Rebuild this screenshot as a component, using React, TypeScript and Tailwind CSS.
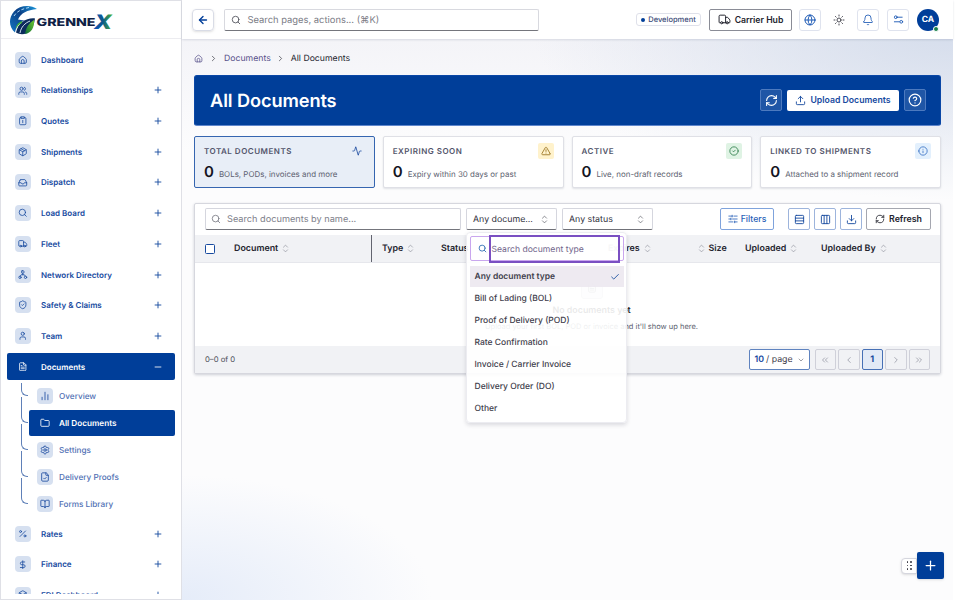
import type { ReactNode } from "react";
import {
  Activity,
  ArrowLeft,
  Bell,
  BookOpen,
  Box,
  Check,
  ChevronDown,
  ChevronLeft,
  ChevronRight,
  ChevronsLeft,
  ChevronsRight,
  ChartNoAxesColumn,
  CircleAlert,
  CircleCheck,
  CircleQuestionMark,
  Columns3,
  Download,
  DollarSign,
  FileCheck,
  FileText,
  Folder,
  Globe,
  Inbox,
  Minus,
  Package,
  Percent,
  Plus,
  RefreshCw,
  Rows3,
  Search,
  Settings,
  ShieldCheck,
  Sun,
  TriangleAlert,
  Truck,
  Upload,
  User,
  Users,
  type LucideIcon,
} from "lucide-react";

type IconProps = { className?: string; strokeWidth?: number };

function Glyph({
  className,
  strokeWidth = 2,
  children,
}: IconProps & { children: ReactNode }) {
  return (
    <svg
      viewBox="0 0 24 24"
      fill="none"
      stroke="currentColor"
      strokeWidth={strokeWidth}
      strokeLinecap="round"
      strokeLinejoin="round"
      className={className}
    >
      {children}
    </svg>
  );
}

function HomeIcon(props: IconProps) {
  return (
    <Glyph {...props}>
      <path d="M3 11.5a3 3 0 0 1 1.1-2.3l6-5.2a3 3 0 0 1 3.8 0l6 5.2a3 3 0 0 1 1.1 2.3V18a3 3 0 0 1-3 3H6a3 3 0 0 1-3-3z" />
      <path d="M8.5 21v-6a3.5 3.5 0 0 1 7 0v6" />
    </Glyph>
  );
}

function ClipboardIcon(props: IconProps) {
  return (
    <Glyph {...props}>
      <path d="M8 4H6.500A2.500 2.500 0 0 0 4 6.500v13A2.500 2.500 0 0 0 6.500 22h11a2.500 2.500 0 0 0 2.500-2.500v-13A2.500 2.500 0 0 0 17.500 4H16" />
      <path d="M8 2h8v4H8zM12 11v6" />
    </Glyph>
  );
}

function NetworkIcon(props: IconProps) {
  return (
    <Glyph {...props}>
      <circle cx="5" cy="18.5" r="3" />
      <circle cx="19" cy="18.5" r="3" />
      <rect x="9" y="2" width="6" height="6" rx="1.5" />
      <path d="M12 8v4M5.5 15.5 8 12h8l2.5 3.5" />
    </Glyph>
  );
}

function SlidersIcon(props: IconProps) {
  return (
    <Glyph {...props}>
      <circle cx="6" cy="7" r="3" />
      <path d="M9 7h11M3 17h11" />
      <circle cx="18" cy="17" r="3" />
    </Glyph>
  );
}

function FilterIcon(props: IconProps) {
  return (
    <Glyph {...props}>
      <path d="M2 5h8M14 5h8M2 12h5M11 12h11M2 19h10M16 19h6M10 3v4M7 10v4M16 17v4" />
    </Glyph>
  );
}

function SortIcon({ className = "size-[9px] text-[#8e909b]" }: IconProps) {
  return (
    <Glyph className={className} strokeWidth={1.8}>
      <path d="M6.5 8.500 12 3l5.500 5.500M6.500 15.500 12 21l5.500-5.500" />
    </Glyph>
  );
}

type NavIcon = LucideIcon | typeof HomeIcon;
type NavEntry = { label: string; icon: NavIcon; leaf?: boolean };

const navTop: NavEntry[] = [
  { label: "Dashboard", icon: HomeIcon, leaf: true },
  { label: "Relationships", icon: Users },
  { label: "Quotes", icon: ClipboardIcon },
  { label: "Shipments", icon: Package },
  { label: "Dispatch", icon: Inbox },
  { label: "Load Board", icon: Search },
  { label: "Fleet", icon: Truck },
  { label: "Network Directory", icon: NetworkIcon },
  { label: "Safety & Claims", icon: ShieldCheck },
  { label: "Team", icon: User },
];

const navBottom: NavEntry[] = [
  { label: "Rates", icon: Percent },
  { label: "Finance", icon: DollarSign },
  { label: "EDI Dashboard", icon: Box },
];

const documentLinks = [
  { label: "Overview", icon: ChartNoAxesColumn },
  { label: "All Documents", icon: Folder, active: true },
  { label: "Settings", icon: Settings },
  { label: "Delivery Proofs", icon: FileCheck },
  { label: "Forms Library", icon: BookOpen },
];

const stats = [
  {
    label: "Total documents",
    hint: "BOLs, PODs, invoices and more",
    icon: Activity,
    tone: "text-[#1d4ca0]",
    active: true,
  },
  {
    label: "Expiring soon",
    hint: "Expiry within 30 days or past",
    icon: TriangleAlert,
    tone: "bg-[#fff2cc] text-[#96701c]",
  },
  {
    label: "Active",
    hint: "Live, non-draft records",
    icon: CircleCheck,
    tone: "bg-[#dff3e4] text-[#2e7d4a]",
  },
  {
    label: "Linked to shipments",
    hint: "Attached to a shipment record",
    icon: CircleAlert,
    tone: "bg-[#e3f0fd] text-[#3a72c4] [&>svg]:rotate-180",
  },
];

const documentTypes = [
  "Any document type",
  "Bill of Lading (BOL)",
  "Proof of Delivery (POD)",
  "Rate Confirmation",
  "Invoice / Carrier Invoice",
  "Delivery Order (DO)",
  "Other",
];

function Logo() {
  return (
    <svg viewBox="0 0 106 32" className="h-8 w-[106px]" aria-label="Grennex">
      <defs>
        <linearGradient id="swoosh" x1="1" y1="0" x2="0" y2="1">
          <stop offset="0" stopColor="#1b9be0" />
          <stop offset="0.45" stopColor="#0b3f86" />
          <stop offset="1" stopColor="#1478c4" />
        </linearGradient>
        <linearGradient id="leaf" x1="0" y1="1" x2="1" y2="0">
          <stop offset="0" stopColor="#0f6c3c" />
          <stop offset="1" stopColor="#6cc82d" />
        </linearGradient>
        <linearGradient id="cross" x1="0" y1="0" x2="1" y2="0">
          <stop offset="0" stopColor="#0b4fc0" />
          <stop offset="0.5" stopColor="#0d5a8a" />
          <stop offset="1" stopColor="#4db82e" />
        </linearGradient>
      </defs>
      <path
        d="M28 5C22 .5 11 .5 5 7.500c-6 7-5 16 1 21 1-6 4-9 9-12l-6-1C12 9 18 6 28 5z"
        fill="url(#swoosh)"
      />
      <path d="M26 14.500c-8-1-17 4-19 14 8 4.500 17 0 19-14z" fill="#0b2c5c" />
      <path d="M25 16c-5 3-8 7-9 14 6-1 9.500-6 9-14z" fill="url(#leaf)" />
      <path d="M13 19c-3 1-5 3-6 6 0-4 2-6 6-8z" fill="#43b23a" />
      <path d="M21 17c-5 2-9 6-10 12" stroke="#e6f3ff" strokeWidth="0.900" fill="none" />
      <path
        d="M5 12c3-5 8-7 15-8.500"
        stroke="#bfe6ff"
        strokeWidth="0.900"
        strokeDasharray="3 2"
        fill="none"
      />
      <text
        x="27.500"
        y="21.500"
        fill="#0f2145"
        fontFamily="Inter, sans-serif"
        fontWeight="800"
        fontSize="11"
        textLength="59"
        lengthAdjust="spacingAndGlyphs"
      >
        GRENNE
      </text>
      <text
        x="85"
        y="24.500"
        fill="url(#cross)"
        fontFamily="Inter, sans-serif"
        fontWeight="800"
        fontStyle="italic"
        fontSize="20"
        textLength="18"
        lengthAdjust="spacingAndGlyphs"
      >
        X
      </text>
    </svg>
  );
}

function NavRow({ entry, open = false }: { entry: NavEntry; open?: boolean }) {
  const Icon = entry.icon;
  return (
    <div className="flex h-[30.700px] shrink-0 items-center">
      <div
        className={`flex h-[27px] w-full items-center rounded-[2px] pl-2 pr-3 ${
          open ? "bg-[#003e99] text-white" : "text-[#174a9f]"
        }`}
      >
        <span
          className={`flex size-4 items-center justify-center rounded-[4px] ${
            open ? "" : "bg-[#d6e0f0]"
          }`}
        >
          <Icon className="size-[9.500px]" strokeWidth={2} />
        </span>
        <span className="ml-2.5 flex-1 text-[8px] font-semibold">
          {entry.label}
        </span>
        {!entry.leaf &&
          (open ? (
            <Minus className="size-[10px]" strokeWidth={2} />
          ) : (
            <Plus className="size-[10px]" strokeWidth={2.2} />
          ))}
      </div>
    </div>
  );
}

function Sidebar() {
  return (
    <aside className="flex h-full w-[182px] shrink-0 flex-col border border-[#dfe0e6] bg-white">
      <div className="flex h-[38px] shrink-0 items-center border-b border-[#ececf0] pl-2">
        <Logo />
      </div>
      <nav className="flex min-h-0 flex-1 flex-col overflow-hidden pl-1.5 pr-1.5 pt-[5.400px]">
        {navTop.map((entry) => (
          <NavRow key={entry.label} entry={entry} />
        ))}
        <NavRow entry={{ label: "Documents", icon: FileText }} open />
        <div className="mb-[0.600px] flex shrink-0 flex-col pl-[13.500px] pt-[0.900px]">
          {documentLinks.map(({ label, icon: Icon, active }, index) => (
            <div key={label} className="flex h-[27px] items-center">
              <span
                className={`w-[7px] shrink-0 self-start rounded-bl-[6px] border-b border-l border-[#5f80b8] ${
                  index === 0 ? "h-[13px]" : "-mt-[13px] h-[26px]"
                }`}
              />
              <div
                className={`ml-[1.500px] flex h-[26px] flex-1 items-center rounded-[2px] pl-[7.500px] ${
                  active
                    ? "bg-[#003e99] font-semibold text-white"
                    : "font-medium text-[#5070b4]"
                }`}
              >
                <span
                  className={`flex size-4 items-center justify-center rounded-[4px] ${
                    active ? "" : "bg-[#d6e0f0] text-[#1d4ca0]"
                  }`}
                >
                  <Icon className="size-[10px]" strokeWidth={2} />
                </span>
                <span className="ml-[6.500px] text-[8.200px]">{label}</span>
              </div>
            </div>
          ))}
        </div>
        {navBottom.map((entry) => (
          <NavRow key={entry.label} entry={entry} />
        ))}
      </nav>
      <div className="h-[5px] shrink-0" />
    </aside>
  );
}

function TopBar() {
  const square =
    "flex size-[22px] items-center justify-center rounded-[3px] border border-[#dfe3ee] bg-white text-[#1d5ab5]";
  return (
    <header className="flex h-[39px] shrink-0 items-center bg-white pl-2.5 pr-3.5 shadow-[0_1px_2px_rgba(20,30,70,0.12)]">
      <button className="flex size-[22px] items-center justify-center rounded-[4px] border border-[#d9dce6] text-[#003e99] shadow-sm">
        <ArrowLeft className="size-3" strokeWidth={2.8} />
      </button>
      <div className="ml-2.5 flex h-[22px] w-[315px] items-center rounded-[2px] border border-[#d8d9df] border-b-[#74757c] pl-1.5 text-[9.400px] text-[#7b7c86]">
        <Search className="size-2.5 text-[#4b4c55]" />
        <span className="ml-[6.500px] pt-[1.500px]">
          Search pages, actions... (⌘K)
        </span>
      </div>
      <div className="ml-auto flex items-center">
        <span className="flex h-[13px] w-[65px] items-center justify-center gap-[3px] rounded-[3px] border border-[#dfe1ea] text-[7.500px] font-medium text-[#3b4a78]">
          <i className="size-1 rounded-full bg-[#003e99]" />
          Development
        </span>
        <button className="ml-2 flex h-[22px] w-[83px] items-center justify-center gap-1 rounded-[2px] border border-[#8a8c96] text-[8.700px] font-semibold text-[#23242e]">
          <Truck className="size-[13px]" strokeWidth={1.8} />
          <span className="pt-px">Carrier Hub</span>
        </button>
        <span className={`ml-[7px] ${square}`}>
          <Globe className="size-3" />
        </span>
        <span className="mx-[7px] flex size-[22px] items-center justify-center text-[#33343e]">
          <Sun className="size-3" strokeWidth={1.8} />
        </span>
        <span className={square}>
          <Bell className="size-3" strokeWidth={1.7} />
        </span>
        <span className={`ml-2 ${square}`}>
          <SlidersIcon className="size-[11px]" />
        </span>
        <span className="relative ml-2 flex size-[22px] items-center justify-center rounded-full bg-[#003e99] pt-px text-[8.500px] font-bold text-white">
          CA
          <i className="absolute -bottom-px right-0 size-[6px] rounded-full border border-white bg-[#178048]" />
        </span>
      </div>
    </header>
  );
}

function Banner() {
  const ghost =
    "flex size-[22px] items-center justify-center rounded-[2px] border border-[#4d7abf] bg-[#1f56a6]";
  return (
    <section className="mt-2.5 flex h-[51px] shrink-0 items-center rounded-[3px] border border-[#0a47a6] border-b-[#5f86cc] bg-[#003e99] pb-px pl-[15px] pr-[14px] text-white">
      <h1 className="flex-1 pt-[2px] text-[18.200px] font-semibold tracking-[-0.1px]">
        All Documents
      </h1>
      <span className={ghost}>
        <RefreshCw className="size-[13px]" />
      </span>
      <button className="ml-[5px] flex h-[21px] w-[112px] items-center justify-center gap-1 rounded-[2px] bg-white text-[8.700px] font-semibold text-[#174a9f]">
        <Upload className="size-[11px]" />
        Upload Documents
      </button>
      <span className={`ml-[5px] ${ghost}`}>
        <CircleQuestionMark className="size-[14px]" />
      </span>
    </section>
  );
}

function StatCards() {
  return (
    <section className="mt-2.5 grid shrink-0 grid-cols-4 gap-2">
      {stats.map(({ label, hint, icon: Icon, tone, active }) => (
        <div
          key={label}
          className={`h-[52px] rounded-[2px] border pl-[9px] pr-[9px] pt-[6px] ${
            active
              ? "border-[#3565b0] bg-[#e8eef7]"
              : "border-[#dfe0e6] bg-white shadow-[0_1px_2px_rgba(20,30,60,0.12)]"
          }`}
        >
          <div className="flex h-4 items-center justify-between">
            <span className="text-[8px] font-semibold uppercase tracking-[0.5px] text-[#52546a]">
              {label}
            </span>
            <span
              className={`flex size-4 items-center justify-center rounded-[2px] ${tone}`}
            >
              <Icon className="size-2.5" />
            </span>
          </div>
          <div className="mt-[3.500px] flex items-baseline gap-[5px] leading-[18px]">
            <b className="text-[15px] font-semibold text-[#14151f]">0</b>
            <span className="text-[7.950px] text-[#5d5f70]">{hint}</span>
          </div>
        </div>
      ))}
    </section>
  );
}

function TypeMenu() {
  return (
    <div className="absolute left-0 top-6 z-20 h-[191px] w-[161px] rounded-[4px] border border-[#ececf1] bg-white/90 px-[3px] pt-[3px] shadow-[0_2px_4px_rgba(20,20,50,0.15)]">
      <div className="relative flex h-[25px] w-[154px] items-center rounded-[2px] border border-[#c9a6ee] bg-white/60 pl-[7px]">
        <Search className="size-[9px] text-[#3573b5]" strokeWidth={2.4} />
        <span className="absolute -top-[2px] left-[18px] flex h-7 w-[131px] items-center border-2 border-[#7a4fc2] pl-[0.500px] pt-[2px] text-[8.600px] text-[#71658c]">
          Search document type
        </span>
      </div>
      <ul className="mt-[4.500px] w-[154px] text-[8.500px] font-medium text-[#3f404c]">
        {documentTypes.map((type, index) => (
          <li
            key={type}
            className={`flex h-[21.950px] items-center justify-between pl-[4.500px] pr-1 pt-[2.500px] ${
              index === 0 ? "bg-[#ece8f0]/90 font-semibold" : ""
            }`}
          >
            {type}
            {index === 0 && (
              <Check
                className="mb-0.5 size-2.5 text-[#2f5fa8]"
                strokeWidth={2.4}
              />
            )}
          </li>
        ))}
      </ul>
    </div>
  );
}

function SelectBox({ label, children }: { label: string; children?: ReactNode }) {
  return (
    <div className="relative ml-[5px] h-[22px] w-[91px]">
      <div className="flex h-full items-center justify-between rounded-[2px] border border-[#d5d6de] border-b-[#707178] bg-white pl-1.5 pr-[7px] text-[8.800px] text-[#30313c]">
        <span className="pt-[2px]">{label}</span>
        <SortIcon className="size-[9px] text-[#55565f]" />
      </div>
      {children}
    </div>
  );
}

function Toolbar() {
  const tool =
    "ml-1 flex size-[22px] items-center justify-center rounded-[2px] border border-[#9db4dc] bg-white text-[#174a9f]";
  return (
    <div className="flex h-[31px] items-center pb-px pl-2.5 pr-[9px]">
      <div className="flex h-[22px] w-[256px] items-center rounded-[2px] border border-[#d5d6de] border-b-[#74757c] pl-[5px] text-[9.200px] text-[#80818b]">
        <Search className="size-2.5 text-[#777882]" />
        <span className="ml-[6px] pt-px">Search documents by name...</span>
      </div>
      <SelectBox label="Any docume...">
        <TypeMenu />
      </SelectBox>
      <SelectBox label="Any status" />
      <button className="ml-auto mr-2.5 flex h-[22px] w-[54px] items-center justify-center gap-[3px] rounded-[2px] border border-[#7fa3dc] text-[8.700px] font-medium text-[#2a62b8]">
        <FilterIcon className="size-[10px]" />
        <span className="pt-px">Filters</span>
      </button>
      <span className={tool}>
        <Rows3 className="size-[11px]" />
      </span>
      <span className={tool}>
        <Columns3 className="size-[11px]" />
      </span>
      <span className={tool}>
        <Download className="size-[11px]" />
      </span>
      <button className="ml-1 flex h-[22px] w-[65px] items-center justify-center gap-1 rounded-[2px] border border-[#a5a7b0] text-[8.800px] font-semibold text-[#23242e]">
        <RefreshCw className="size-[10px]" />
        <span className="pt-px">Refresh</span>
      </button>
    </div>
  );
}

function Pager() {
  const cell =
    "flex h-[21px] w-[21.500px] items-center justify-center rounded-[2px] border border-[#cfd0d9] text-[#9a9ca8]";
  return (
    <div className="flex h-[27px] items-center bg-[#f1f2f5] pl-2.5 pr-2.5">
      <span className="flex-1 text-[7.700px] text-[#4c4d58]">0–0 of 0</span>
      <span className="mr-[5px] flex h-[21px] w-[61px] items-center rounded-[2px] border border-[#5f83bf] bg-white pl-[5px] text-[8.800px] text-[#3f404c]">
        <b className="pt-px font-semibold text-[#174a9f]">10</b>
        <span className="ml-0.5 pt-px">/ page</span>
        <ChevronDown className="ml-1 size-2 text-[#6c6e7a]" />
      </span>
      <div className="flex gap-[2px]">
        <span className={cell}>
          <ChevronsLeft className="size-2.5" />
        </span>
        <span className={cell}>
          <ChevronLeft className="size-2.5" />
        </span>
        <span className="flex h-[21px] w-[21.500px] items-center justify-center rounded-[2px] border border-[#4670b5] bg-[#e2eaf6] text-[9px] font-bold text-[#174a9f]">
          1
        </span>
        <span className={cell}>
          <ChevronRight className="size-2.5" />
        </span>
        <span className={cell}>
          <ChevronsRight className="size-2.5" />
        </span>
      </div>
    </div>
  );
}

function DocumentsTable() {
  const head = "flex items-center gap-[3px]";
  return (
    <section className="mt-[15px] shrink-0 rounded-[2px] border border-[#d6d7de] bg-white shadow-[0_1px_3px_rgba(20,30,60,0.2)]">
      <Toolbar />
      <div className="grid h-7 grid-cols-[39px_138px_10px_59px_167px_82px_55px_76px_1fr] border-b border-[#e6e7ec] bg-[#f1f2f5] text-[8.900px] font-semibold leading-[13px] text-[#23242e]">
        <span className="flex items-center pl-2.5">
          <i className="size-[10px] rounded-[1.500px] border border-[#174a9f] bg-white" />
        </span>
        <span className={`${head} border-r border-[#62646f]`}>
          Document
          <SortIcon />
        </span>
        <span />
        <span className={head}>
          Type
          <SortIcon />
        </span>
        <span className={head}>Status</span>
        <span className={head}>
          Expires
          <SortIcon />
        </span>
        <span className="flex items-center gap-[3px] pl-[6.500px]">
          <SortIcon />
          Size
        </span>
        <span className={head}>
          Uploaded
          <SortIcon />
        </span>
        <span className={head}>
          Uploaded By
          <SortIcon />
        </span>
      </div>
      <div className="flex h-[83px] flex-col items-center pl-[48px] pt-[14px]">
        <span className="flex size-[22px] items-center justify-center rounded-[3px] border border-[#c8c9d6] bg-[#eeeff3] text-[#777986]">
          <FileText className="size-2.5" />
        </span>
        <p className="mt-[5px] text-[8.900px] font-semibold leading-[14px] text-[#1e1f29]">
          No documents yet
        </p>
        <p className="mt-[3px] text-[7.500px] leading-3 text-[#5d5f70]">
          Upload your first BOL, POD or invoice and it'll show up here.
        </p>
      </div>
      <Pager />
    </section>
  );
}

export default function App() {
  return (
    <div className="relative flex h-[600px] w-[960px] overflow-hidden bg-white pr-[7px] font-['Inter',sans-serif] leading-none [text-rendering:geometricPrecision]">
      <Sidebar />
      <div className="flex min-w-0 flex-1 flex-col bg-[#fcfcfd] bg-[radial-gradient(ellipse_420px_170px_at_100%_30px,#d5ddec,transparent),radial-gradient(ellipse_250px_125px_at_0%_100%,#e5ecf9,transparent),linear-gradient(to_bottom,#f4f4f8_40px,transparent_150px)]">
        <TopBar />
        <main className="flex flex-1 flex-col pl-3 pr-3 pt-3">
          <div className="flex h-[14px] items-center text-[8.700px] text-[#57508a]">
            <HomeIcon className="size-[9px]" />
            <ChevronRight className="mx-[5.500px] size-[9px] text-[#44454f]" />
            <span className="ml-px pt-[2.500px]">Documents</span>
            <ChevronRight className="mx-[5.500px] size-[9px] text-[#44454f]" />
            <span className="pt-[2.500px] text-[#23242e]">All Documents</span>
          </div>
          <Banner />
          <StatCards />
          <DocumentsTable />
        </main>
      </div>
      <div className="absolute bottom-[21px] right-4 flex items-center">
        <span className="grid h-4 w-4 grid-cols-[1.500px_1.500px] place-content-center gap-x-[2px] gap-y-[2px] rounded-l-[4px] border border-[#d5d6de] bg-white shadow-sm">
          {[0, 1, 2, 3, 4, 5].map((dot) => (
            <i key={dot} className="size-[1.500px] rounded-full bg-[#33343e]" />
          ))}
        </span>
        <button className="flex size-[27px] items-center justify-center rounded-[2px] bg-[#003e99] text-white shadow">
          <Plus className="size-[15px]" strokeWidth={2} />
        </button>
      </div>
    </div>
  );
}
